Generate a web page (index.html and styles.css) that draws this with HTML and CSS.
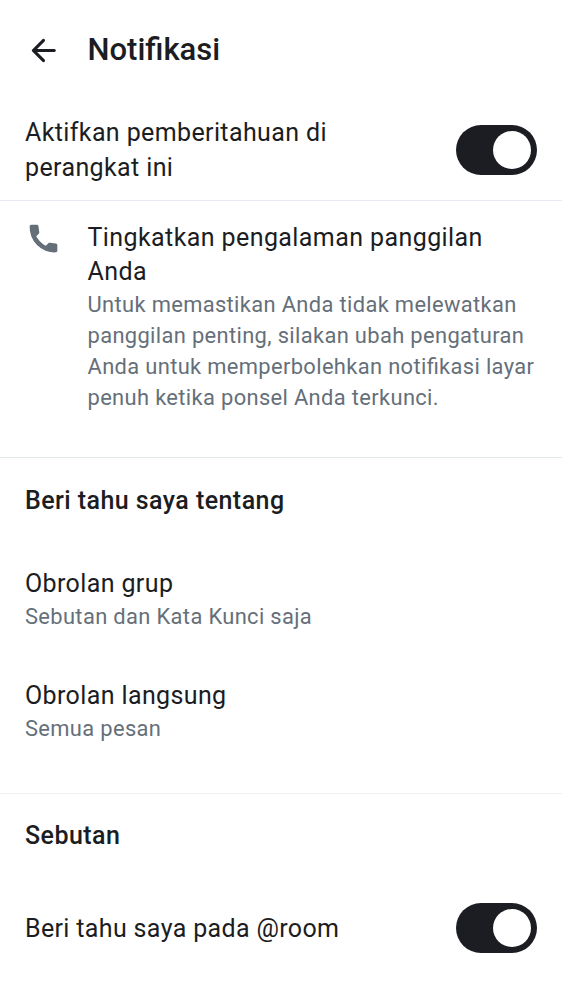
FILE: index.html
```
<!DOCTYPE html>
<html lang="id">
<head>
<meta charset="utf-8">
<title>Notifikasi</title>
<link rel="stylesheet" href="styles.css">
</head>
<body>
<main class="screen">
  <header class="topbar">
    <svg class="back" viewBox="0 0 24 24"><path d="M7.825 13l4.9 4.9a.95.95 0 0 1 .287.7.98.98 0 0 1-.312.7.98.98 0 0 1-.7.287.93.93 0 0 1-.7-.287l-6.6-6.6a.88.88 0 0 1-.213-.325 1.1 1.1 0 0 1-.062-.375q0-.2.062-.375A.88.88 0 0 1 4.7 11.3l6.6-6.6a.93.93 0 0 1 .687-.275q.413 0 .713.275.3.3.3.713 0 .412-.3.712L7.825 11H19q.424 0 .712.287.288.288.288.713 0 .424-.288.713A.97.97 0 0 1 19 13z"/></svg>
    <h1 class="title">Notifikasi</h1>
  </header>
  <div class="row device-row">
    <span class="label device-label">Aktifkan pemberitahuan di perangkat ini</span>
    <span class="switch"></span>
  </div>
  <section class="call">
    <svg class="phone" viewBox="0 0 24 24"><path d="m20.958 16.374.039 3.527q0 .427-.33.756-.33.33-.756.33a16 16 0 0 1-6.57-1.105 16.2 16.2 0 0 1-5.563-3.663 16.1 16.1 0 0 1-3.653-5.573 16.3 16.3 0 0 1-1.115-6.56q0-.427.33-.757T4.095 3l3.528.039a1.07 1.07 0 0 1 1.085.93l.543 3.954q.039.271-.039.504a1.1 1.1 0 0 1-.271.426l-1.64 1.64q.505 1.008 1.154 1.909c.433.6 1.444 1.696 1.444 1.696s1.095 1.01 1.696 1.444q.9.65 1.909 1.153l1.64-1.64q.193-.193.426-.27t.504-.04l3.954.543q.406.059.668.359t.262.727"/></svg>
    <div class="call-text">
      <h2 class="label">Tingkatkan pengalaman panggilan Anda</h2>
      <p class="sub">Untuk memastikan Anda tidak melewatkan panggilan penting, silakan ubah pengaturan Anda untuk memperbolehkan notifikasi layar penuh ketika ponsel Anda terkunci.</p>
    </div>
  </section>
  <section class="about">
    <h2 class="heading">Beri tahu saya tentang</h2>
    <div class="items">
      <div class="item"><div class="label">Obrolan grup</div><div class="sub">Sebutan dan Kata Kunci saja</div></div>
      <div class="item"><div class="label">Obrolan langsung</div><div class="sub">Semua pesan</div></div>
    </div>
  </section>
  <section class="mentions">
    <h2 class="heading">Sebutan</h2>
    <div class="row room-row"><span class="label">Beri tahu saya pada @room</span><span class="switch"></span></div>
  </section>
</main>
</body>
</html>
```
FILE: styles.css
```
* { box-sizing: border-box; }
body, h1, h2, p { margin: 0; }
body { background: #fff; color: #1b1d22; font-family: Roboto, sans-serif; font-feature-settings: "liga" 1; }
.screen { height: 1000px; overflow: hidden; }
.topbar { height: 100px; display: flex; align-items: center; padding-left: 25px; }
.back { width: 37px; height: 37px; margin: 0 25.5px 0 0; fill: #1b1d22; }
.title { font-size: 31px; font-weight: 500; line-height: 40px; }
.row { display: flex; align-items: center; justify-content: space-between; padding: 0 25px; }
.device-row { height: 100px; }
.device-label { width: 330px; padding-top: 1px; }
.label { font-size: 25px; font-weight: 400; line-height: 34.4px; letter-spacing: .38px; }
.sub { font-size: 21.9px; line-height: 31.2px; letter-spacing: .35px; color: #656f79; }
.switch { width: 81px; height: 50px; border-radius: 25px; background: #1b1d22; display: flex; align-items: center; justify-content: flex-end; padding-right: 6px; }
.switch::before { content: ""; width: 38px; height: 38px; border-radius: 50%; background: #fff; }
.call { height: 257px; border-top: 1px solid #e8e9f2; display: flex; padding: 19px 25px 0; }
.phone { flex: none; width: 37px; height: 37px; margin-right: 25.5px; fill: #656f79; }
.call-text { flex: 1; padding-top: 1px; }
.call-text .label { letter-spacing: .41px; }
.call-text .sub { margin-top: -1px; }
.about { height: 336px; border-top: 1px solid #e3e8e8; padding: 26px 25px 0; }
.heading { font-size: 25px; font-weight: 500; line-height: 34px; letter-spacing: .44px; }
.items { padding-top: 48.5px; }
.item { height: 112.2px; }
.mentions { border-top: 1px solid #f0f0f1; }
.mentions .heading { padding: 25px 25px 0; }
.room-row { height: 100px; margin-top: 25px; }
.room-row .label { padding-top: 2px; letter-spacing: .35px; }
```
